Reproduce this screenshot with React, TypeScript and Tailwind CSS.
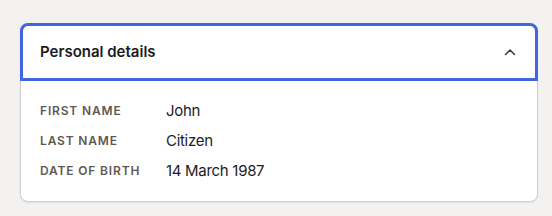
import React from 'react';

const rows: { label: string; value: string }[] = [
  { label: 'First name', value: 'John' },
  { label: 'Last name', value: 'Citizen' },
  { label: 'Date of birth', value: '14 March 1987' },
];

const App = () => {
  return (
    <div className="min-h-[216px] bg-[#f3f2f0] pl-5 pr-[14px] pt-[23px] font-['Inter',sans-serif]">
      <div className="rounded-lg border border-[#d3d0cc] bg-white shadow-[0_1px_2px_rgba(0,0,0,0.08)]">
        {/* Accordion header */}
        <button className="-m-px flex h-[58px] w-[calc(100%+2px)] items-center justify-between rounded-t-lg border-[3px] border-[#4166e1] pl-[17px] pr-[18px] text-left">
          <span className="pt-px text-[15px] font-semibold text-[#1b1b1f]">Personal details</span>
          <svg width="14" height="14" viewBox="0 0 14 14" fill="none" className="text-[#3a3a3a]">
            <path d="M2.5 9.5L7 5L11.5 9.5" stroke="currentColor" strokeWidth="1.5" strokeLinecap="round" strokeLinejoin="round" />
          </svg>
        </button>

        {/* Details */}
        <div className="px-[19px] pb-[15px] pt-4">
          {rows.map((row) => (
            <div key={row.label} className="flex h-[30px] items-center">
              <span className="w-[126px] text-[12px] font-semibold uppercase tracking-[0.07em] text-[#5f5852]">
                {row.label}
              </span>
              <span className="text-[15px] tracking-[-0.02em] text-[#1c1c1f]">{row.value}</span>
            </div>
          ))}
        </div>
      </div>
    </div>
  );
};

export default App;
